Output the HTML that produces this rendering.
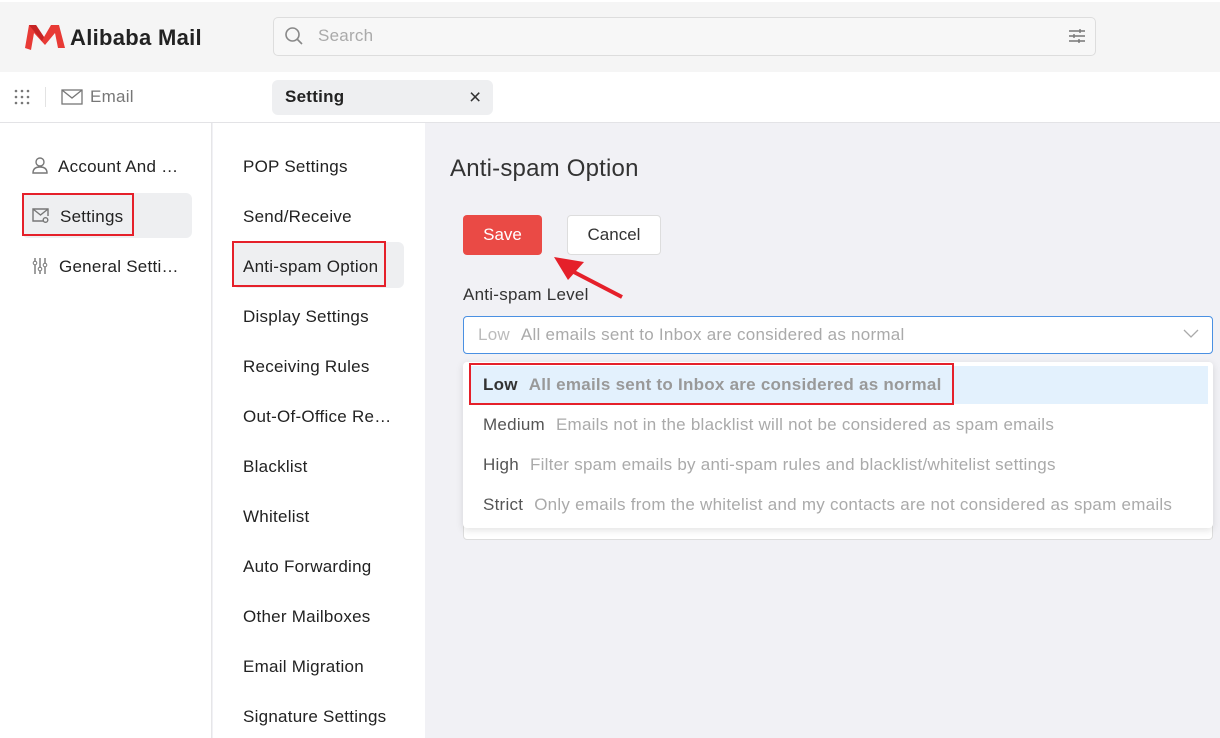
<!DOCTYPE html>
<html><head><style>
*{margin:0;padding:0;box-sizing:border-box}
body{width:1220px;height:738px;overflow:hidden;font-family:"Liberation Sans",sans-serif;background:#f1f1f5;position:relative;color:#222}
.a{position:absolute}
.hdr{left:0;top:0;width:1220px;height:72px;background:#f5f5f5;border-top:2px solid #fff}
.nav{left:0;top:72px;width:1220px;height:51px;background:#fff;border-bottom:1px solid #e3e3e6}
.side{left:0;top:123px;width:212px;height:615px;background:#fff;border-right:1px solid #e6e6e8}
.side2{left:213px;top:123px;width:212px;height:615px;background:#fff}
.t{font-size:17px;white-space:nowrap;letter-spacing:0.25px}
.red{border:2px solid #e5202a}
</style></head><body>
<div class="a hdr"></div>
<svg class="a" style="left:25px;top:23px" width="42" height="28" viewBox="0 0 42 28"><path d="M0 25 L4 2 L11 2 L19 14 L26 2 L34 2 L40 25 L33 25 L30 10 L20 22 L9 10 L6 27 Z" fill="#e83a35"/><path d="M4 2 L11 2 L19 14 L17 18 Z" fill="#c62424"/></svg>
<div class="a" style="left:70px;top:25px;font-size:22px;font-weight:bold;color:#222;letter-spacing:0.3px">Alibaba Mail</div>
<div class="a" style="left:273px;top:17px;width:823px;height:39px;border:1px solid #ddd;border-radius:5px;background:#f7f7f7"></div>
<svg class="a" style="left:284px;top:26px" width="20" height="20" viewBox="0 0 20 20"><circle cx="8.5" cy="8.5" r="6.5" fill="none" stroke="#888" stroke-width="1.6"/><path d="M13.5 13.5 L18 18" stroke="#888" stroke-width="1.6"/></svg>
<div class="a t" style="left:318px;top:26px;color:#aaa">Search</div>
<svg class="a" style="left:1068px;top:28px" width="18" height="16" viewBox="0 0 18 16"><path d="M1 3h16M1 8h16M1 13h16M12 1v4M6 6v4M11 11v4" stroke="#777" stroke-width="1.4" fill="none"/></svg>
<div class="a nav"></div>
<svg class="a" style="left:14px;top:89px" width="18" height="18"><g fill="#777"><circle cx="2" cy="2" r="1.3"/><circle cx="8" cy="2" r="1.3"/><circle cx="14" cy="2" r="1.3"/><circle cx="2" cy="8" r="1.3"/><circle cx="8" cy="8" r="1.3"/><circle cx="14" cy="8" r="1.3"/><circle cx="2" cy="14" r="1.3"/><circle cx="8" cy="14" r="1.3"/><circle cx="14" cy="14" r="1.3"/></g></svg>
<div class="a" style="left:45px;top:87px;width:1px;height:20px;background:#e3e3e3"></div>
<svg class="a" style="left:61px;top:88px" width="22" height="18"><rect x="1" y="2" width="20" height="14" fill="none" stroke="#777" stroke-width="1.3"/><path d="M1 2 L11 10 L21 2" fill="none" stroke="#777" stroke-width="1.3"/></svg>
<div class="a t" style="left:90px;top:87px;color:#777">Email</div>
<div class="a" style="left:272px;top:80px;width:221px;height:35px;background:#eeeff1;border-radius:6px"></div>
<div class="a t" style="left:285px;top:87px;font-weight:bold">Setting</div>
<div class="a" style="left:469px;top:86px;font-size:21px;color:#333">×</div>
<div class="a side"></div><div class="a side2"></div>
<svg class="a" style="left:31px;top:156px" width="18" height="18"><circle cx="9" cy="6" r="4" fill="none" stroke="#777" stroke-width="1.4"/><path d="M2 17 Q2 11 9 11 Q16 11 16 17 Z" fill="none" stroke="#777" stroke-width="1.4"/></svg>
<div class="a t" style="left:58px;top:157px">Account And …</div>
<div class="a" style="left:22px;top:193px;width:170px;height:45px;background:#eeeff1;border-radius:6px"></div>
<div class="a red" style="left:22px;top:193px;width:112px;height:43px"></div>
<svg class="a" style="left:31px;top:207px" width="19" height="17"><path d="M13 14H2V2h15v7" fill="none" stroke="#777" stroke-width="1.4"/><path d="M2 2 L9.5 8 L17 2" fill="none" stroke="#777" stroke-width="1.4"/><circle cx="14.5" cy="13" r="2.3" fill="none" stroke="#777" stroke-width="1.4"/></svg>
<div class="a t" style="left:60px;top:207px">Settings</div>
<svg class="a" style="left:32px;top:257px" width="16" height="18"><path d="M3 1v16M8 1v16M13 1v16" stroke="#777" stroke-width="1.4"/><circle cx="3" cy="6" r="1.8" fill="#fff" stroke="#777"/><circle cx="8" cy="12" r="1.8" fill="#fff" stroke="#777"/><circle cx="13" cy="8" r="1.8" fill="#fff" stroke="#777"/></svg>
<div class="a t" style="left:59px;top:257px">General Setti…</div>
<div class="a t" style="left:243px;top:157px">POP Settings</div>
<div class="a t" style="left:243px;top:207px">Send/Receive</div>
<div class="a" style="left:233px;top:242px;width:171px;height:46px;background:#eeeff1;border-radius:6px"></div>
<div class="a red" style="left:232px;top:241px;width:154px;height:46px"></div>
<div class="a t" style="left:243px;top:257px">Anti-spam Option</div>
<div class="a t" style="left:243px;top:307px">Display Settings</div>
<div class="a t" style="left:243px;top:357px">Receiving Rules</div>
<div class="a t" style="left:243px;top:407px">Out-Of-Office Re…</div>
<div class="a t" style="left:243px;top:457px">Blacklist</div>
<div class="a t" style="left:243px;top:507px">Whitelist</div>
<div class="a t" style="left:243px;top:557px">Auto Forwarding</div>
<div class="a t" style="left:243px;top:607px">Other Mailboxes</div>
<div class="a t" style="left:243px;top:657px">Email Migration</div>
<div class="a t" style="left:243px;top:707px">Signature Settings</div>
<div class="a" style="left:450px;top:155px;font-size:24px;color:#333;letter-spacing:0.2px">Anti-spam Option</div>
<div class="a" style="left:463px;top:215px;width:79px;height:40px;background:#ea4a45;border-radius:4px;color:#fff;font-size:17px;text-align:center;line-height:39px">Save</div>
<div class="a" style="left:567px;top:215px;width:94px;height:40px;background:#fff;border:1px solid #ddd;border-radius:4px;font-size:17px;text-align:center;line-height:37px;color:#333">Cancel</div>
<svg class="a" style="left:550px;top:252px" width="76" height="48"><path d="M72 45 L20 18" stroke="#e5202a" stroke-width="4"/><path d="M4 5 L34 10 L18 28 Z" fill="#e5202a"/></svg>
<div class="a t" style="left:463px;top:285px;color:#333">Anti-spam Level</div>
<div class="a" style="left:463px;top:316px;width:750px;height:38px;background:#fff;border:1px solid #4a90e2;border-radius:4px"></div>
<div class="a t" style="left:478px;top:325px;color:#bbb">Low <span style="margin-left:6px;color:#aaa">All emails sent to Inbox are considered as normal</span></div>
<svg class="a" style="left:1183px;top:328px" width="16" height="12"><path d="M1 2 L8 9 L15 2" fill="none" stroke="#aaa" stroke-width="1.3"/></svg>
<div class="a" style="left:463px;top:372px;width:750px;height:168px;border:1px solid #ddd;border-radius:4px;background:#fff"></div>
<div class="a" style="left:463px;top:362px;width:750px;height:166px;background:#fff;box-shadow:0 2px 8px rgba(0,0,0,.12);border-radius:4px"></div>
<div class="a" style="left:469px;top:366px;width:739px;height:38px;background:#e3f1fd"></div>
<div class="a red" style="left:469px;top:363px;width:485px;height:42px"></div>
<div class="a t" style="left:483px;top:375px"><b style="color:#333">Low</b> <b style="margin-left:6px;color:#999">All emails sent to Inbox are considered as normal</b></div>
<div class="a t" style="left:483px;top:415px;color:#555">Medium <span style="margin-left:6px;color:#aaa">Emails not in the blacklist will not be considered as spam emails</span></div>
<div class="a t" style="left:483px;top:455px;color:#555">High <span style="margin-left:6px;color:#aaa">Filter spam emails by anti-spam rules and blacklist/whitelist settings</span></div>
<div class="a t" style="left:483px;top:495px;color:#555">Strict <span style="margin-left:6px;color:#aaa">Only emails from the whitelist and my contacts are not considered as spam emails</span></div>
</body></html>
